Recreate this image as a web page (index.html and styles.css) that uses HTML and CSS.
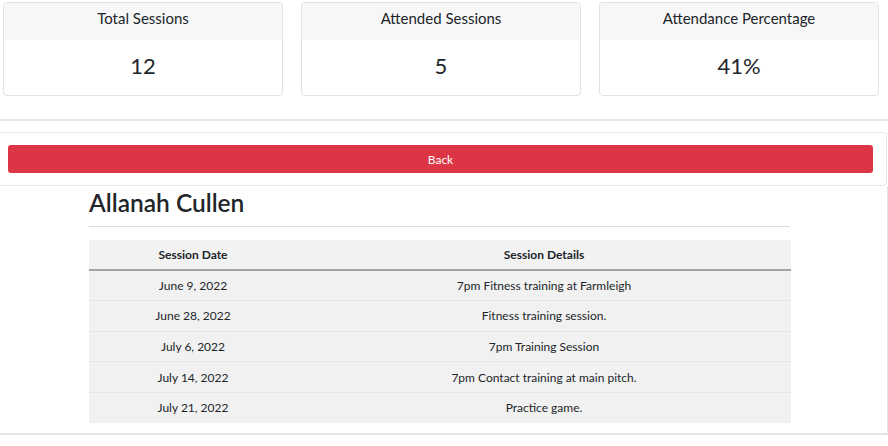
FILE: index.html
```html
<!DOCTYPE html>
<html>
<head>
<meta charset="utf-8">
<link rel="stylesheet" href="styles.css">
</head>
<body>
<section class="stats">
  <div class="stat-card">
    <div class="stat-head">Total Sessions</div>
    <div class="stat-body">12</div>
  </div>
  <div class="stat-card">
    <div class="stat-head">Attended Sessions</div>
    <div class="stat-body">5</div>
  </div>
  <div class="stat-card">
    <div class="stat-head">Attendance Percentage</div>
    <div class="stat-body">41%</div>
  </div>
</section>
<section class="actions">
  <button class="btn-back">Back</button>
</section>
<section class="detail">
  <div class="inner">
    <h2 class="name">Allanah Cullen</h2>
    <hr class="rule">
    <table class="sessions">
      <thead>
        <tr><th class="c1">Session Date</th><th>Session Details</th></tr>
      </thead>
      <tbody>
        <tr><td class="c1">June 9, 2022</td><td>7pm Fitness training at Farmleigh</td></tr>
        <tr><td class="c1">June 28, 2022</td><td>Fitness training session.</td></tr>
        <tr><td class="c1">July 6, 2022</td><td>7pm Training Session</td></tr>
        <tr><td class="c1">July 14, 2022</td><td>7pm Contact training at main pitch.</td></tr>
        <tr><td class="c1">July 21, 2022</td><td>Practice game.</td></tr>
      </tbody>
    </table>
  </div>
</section>
</body>
</html>
```

FILE: styles.css
```css
* { box-sizing: border-box; }
html, body { margin: 0; padding: 0; background: #fff; }
body {
  width: 888px;
  height: 446px;
  overflow: hidden;
  font-family: Lato, "Open Sans", sans-serif;
  color: #212529;
}
.stats {
  display: grid;
  grid-template-columns: 280px 280px 280px;
  column-gap: 18px;
  padding: 2px 0 23px 3px;
  border-bottom: 2px solid #e8e8e8;
}
.stat-card {
  border: 1px solid #e2e2e2;
  border-radius: 4px;
  overflow: hidden;
  height: 94px;
}
.stat-head {
  background: #f7f7f7;
  height: 37px;
  text-align: center;
  font-size: 15px;
  line-height: 31px;
}
.stat-body {
  text-align: center;
  font-size: 22px;
  line-height: 51px;
}
.actions {
  margin: 11px 1px 0 -4px;
  border: 1px solid #e6e6e6;
  border-radius: 4px;
  padding: 12px 13px 12px 11px;
}
.btn-back {
  display: block;
  width: 100%;
  height: 28px;
  border: none;
  border-radius: 3px;
  background: #dc3545;
  color: #fff;
  font-family: Lato, "Open Sans", sans-serif;
  font-size: 12px;
  padding: 0;
}
.detail {
  border-right: 1px solid #e4e4e4;
  border-bottom: 2px solid #e4e4e4;
  height: 249px;
}
.inner {
  width: 702px;
  margin-left: 89px;
}
.name {
  margin: 0;
  padding-top: 2px;
  font-size: 24.5px;
  font-weight: 600;
  line-height: 30px;
  color: #212529;
}
.rule {
  margin: 8px 0 13px 0;
  border: none;
  border-top: 1px solid #dcdcdc;
  width: 701px;
}
.sessions {
  width: 702px;
  border-collapse: collapse;
  font-size: 12px;
}
.sessions th {
  background: #f2f2f2;
  font-weight: 700;
  height: 30px;
  text-align: center;
  border-bottom: 2px solid #a3a3a3;
  padding: 0;
}
.sessions td {
  background: #f1f1f1;
  height: 30.6px;
  text-align: center;
  border-top: 1px solid #e6e6e6;
  padding: 0;
}
.sessions .c1 { width: 208px; }
```
